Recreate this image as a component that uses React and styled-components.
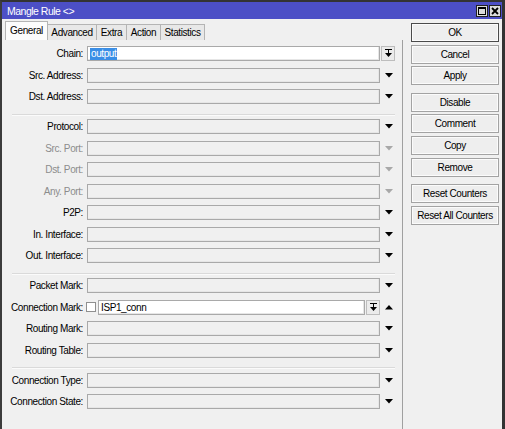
import React from "react";
import styled, { createGlobalStyle } from "styled-components";

const GlobalStyle = createGlobalStyle`
  body {
    margin: 0;
    background: #f0f0f0;
    font-family: "Liberation Sans", Arial, sans-serif;
    font-size: 10px;
    letter-spacing: -0.4px;
  }
`;

const Window = styled.div`
  width: 505px;
  height: 429px;
  box-sizing: border-box;
  border-top: 2px solid #333;
  border-left: 2px solid #3c3c3c;
  border-right: 3px solid #333;
  background: #f0f0f0;
  display: flex;
  flex-direction: column;
  overflow: hidden;
`;

const TitleBar = styled.div`
  height: 17px;
  flex: none;
  background: #4c4fc6;
  color: #fff;
  display: flex;
  align-items: center;
  justify-content: space-between;
  padding: 0 1px 0 5px;
  font-size: 10.5px;
  letter-spacing: -0.5px;
`;

const TitleButtons = styled.div`
  display: flex;
  gap: 1px;
`;

const TitleButton = styled.div`
  width: 12px;
  height: 12px;
  box-sizing: border-box;
  border: 1px solid #222;
  background: #dcdcdc;
  display: flex;
  align-items: center;
  justify-content: center;
`;

const Body = styled.div`
  flex: 1;
  display: flex;
`;

const FormPane = styled.div`
  width: 401px;
  display: flex;
  flex-direction: column;
  padding-top: 2px;
`;

const TabStrip = styled.div`
  display: flex;
  align-items: flex-end;
  height: 19px;
  padding-left: 4px;
`;

const Tab = styled.div`
  width: ${p => p.$w}px;
  height: ${p => (p.$active ? 19 : 16)}px;
  box-sizing: border-box;
  border: 1px solid #b4b4b4;
  border-bottom: none;
  margin-left: -1px;
  background: ${p => (p.$active ? "#fcfcfc" : "#e8e8e8")};
  display: flex;
  align-items: center;
  justify-content: center;
  color: #000;
  position: relative;
  z-index: ${p => (p.$active ? 1 : 0)};
  padding-bottom: ${p => (p.$active ? 2 : 0)}px;
`;

const TabPage = styled.div`
  flex: 1;
  border-right: 1px solid #a0a0a0;
  padding-top: 3px;
  display: flex;
  flex-direction: column;
`;

const Row = styled.div`
  height: 21.5px;
  display: flex;
  align-items: center;
`;

const Label = styled.div`
  width: 81px;
  margin-right: 4px;
  text-align: right;
  white-space: nowrap;
  color: ${p => (p.$disabled ? "#8c8c8c" : "#000")};
`;

const Control = styled.div`
  width: 293px;
  height: 15px;
  display: flex;
  align-items: center;
`;

const Field = styled.div`
  flex: 1;
  height: 15px;
  box-sizing: border-box;
  border: 1px solid #a9a9a9;
  box-shadow: inset -1px -1px 0 #e6e6e6;
  background: ${p => (p.$white ? "#fff" : "#f0f0f0")};
  display: flex;
  align-items: center;
  padding-left: 2px;
  color: #000;
  white-space: nowrap;
  overflow: hidden;
`;

const Selected = styled.span`
  background: #3a8ee6;
  color: #fff;
  padding: 0 1px;
  line-height: 12px;
`;

const Trailing = styled.div`
  width: 18px;
  height: 15px;
  display: flex;
  align-items: center;
  justify-content: center;
`;

const SmallButton = styled.div`
  width: 14px;
  height: 15px;
  box-sizing: border-box;
  border: 1px solid #bdbdbd;
  background: #ebebeb;
  display: flex;
  align-items: center;
  justify-content: center;
  margin-left: ${p => p.$ml || 0}px;
`;

const CheckBox = styled.div`
  width: 10px;
  height: 10px;
  box-sizing: border-box;
  border: 1px solid #8f8f8f;
  background: #fff;
  margin: 0 2px 0 -1px;
  flex: none;
`;

const Separator = styled.div`
  height: 0;
  margin: 6px 7px 0.5px 10px;
  border-top: 1px solid #dadada;
  border-bottom: 1px solid #fbfbfb;
`;

const ButtonColumn = styled.div`
  width: 88px;
  padding: 4px 0 0 8px;
  display: flex;
  flex-direction: column;
`;

const ButtonGroup = styled.div`
  display: flex;
  flex-direction: column;
  gap: 2.7px;
  margin-bottom: 7.3px;
`;

const Button = styled.div`
  height: 19px;
  box-sizing: border-box;
  border: 1px solid ${p => (p.$default ? "#4a4a4a" : "#a3a3a3")};
  box-shadow: inset 0 0 0 1px #fbfbfb;
  background: #eeeeee;
  display: flex;
  align-items: center;
  justify-content: center;
  color: #000;
  white-space: nowrap;
`;

const DownArrow = ({ disabled }) => (
  <svg width="8" height="5" viewBox="0 0 8 5">
    <polygon points="0,0 8,0 4,4.5" fill={disabled ? "#a8a8a8" : "#000"} />
  </svg>
);

const UpArrow = () => (
  <svg width="8" height="5" viewBox="0 0 8 5">
    <polygon points="0,4.5 8,4.5 4,0" fill="#000" />
  </svg>
);

const DropIcon = () => (
  <svg width="7" height="9" viewBox="0 0 7 9">
    <rect x="0" y="0" width="7" height="1" fill="#000" />
    <rect x="3" y="1" width="1" height="3" fill="#000" />
    <polygon points="0,4 7,4 3.5,8" fill="#000" />
  </svg>
);

const ComboRow = ({ label, disabled }) => (
  <Row>
    <Label $disabled={disabled}>{label}:</Label>
    <Control>
      <Field />
    </Control>
    <Trailing>
      <DownArrow disabled={disabled} />
    </Trailing>
  </Row>
);

const tabs = [
  { name: "General", w: 43, active: true },
  { name: "Advanced", w: 50 },
  { name: "Extra", w: 31 },
  { name: "Action", w: 35 },
  { name: "Statistics", w: 45 },
];

const buttonGroups = [
  ["OK", "Cancel", "Apply"],
  ["Disable", "Comment", "Copy", "Remove"],
  ["Reset Counters", "Reset All Counters"],
];

export default function App() {
  return (
    <>
      <GlobalStyle />
      <Window>
        <TitleBar>
          <span>Mangle Rule &lt;&gt;</span>
          <TitleButtons>
            <TitleButton>
              <svg width="8" height="8" viewBox="0 0 8 8">
                <rect x="0.5" y="0.5" width="7" height="7" fill="none" stroke="#000" />
                <rect x="0" y="0" width="8" height="2" fill="#000" />
              </svg>
            </TitleButton>
            <TitleButton>
              <svg width="8" height="8" viewBox="0 0 8 8">
                <path d="M1 1 L7 7 M7 1 L1 7" stroke="#000" strokeWidth="1.8" />
              </svg>
            </TitleButton>
          </TitleButtons>
        </TitleBar>
        <Body>
          <FormPane>
            <TabStrip>
              {tabs.map(t => (
                <Tab key={t.name} $w={t.w} $active={t.active}>
                  {t.name}
                </Tab>
              ))}
            </TabStrip>
            <TabPage>
              <Row>
                <Label>Chain:</Label>
                <Control>
                  <Field $white>
                    <Selected>output</Selected>
                  </Field>
                </Control>
                <Trailing>
                  <SmallButton $ml={-2}>
                    <DropIcon />
                  </SmallButton>
                </Trailing>
              </Row>
              <ComboRow label="Src. Address" />
              <ComboRow label="Dst. Address" />
              <Separator />
              <ComboRow label="Protocol" />
              <ComboRow label="Src. Port" disabled />
              <ComboRow label="Dst. Port" disabled />
              <ComboRow label="Any. Port" disabled />
              <ComboRow label="P2P" />
              <ComboRow label="In. Interface" />
              <ComboRow label="Out. Interface" />
              <Separator />
              <ComboRow label="Packet Mark" />
              <Row>
                <Label>Connection Mark:</Label>
                <Control>
                  <CheckBox />
                  <Field $white>ISP1_conn</Field>
                  <SmallButton $ml={1}>
                    <DropIcon />
                  </SmallButton>
                </Control>
                <Trailing>
                  <UpArrow />
                </Trailing>
              </Row>
              <ComboRow label="Routing Mark" />
              <ComboRow label="Routing Table" />
              <Separator />
              <ComboRow label="Connection Type" />
              <ComboRow label="Connection State" />
            </TabPage>
          </FormPane>
          <ButtonColumn>
            {buttonGroups.map((g, i) => (
              <ButtonGroup key={i}>
                {g.map(b => (
                  <Button key={b} $default={b === "OK"}>
                    {b}
                  </Button>
                ))}
              </ButtonGroup>
            ))}
          </ButtonColumn>
        </Body>
      </Window>
    </>
  );
}
